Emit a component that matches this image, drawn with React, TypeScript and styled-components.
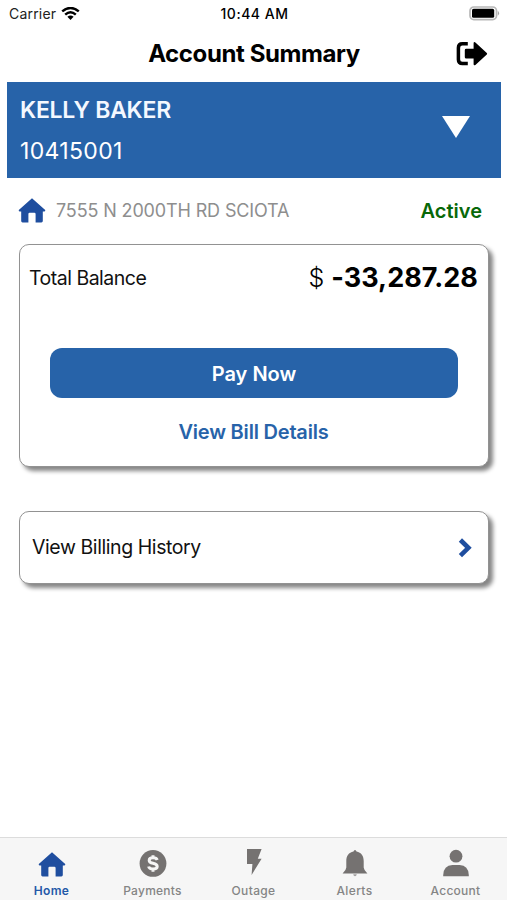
import React from "react";
import styled, { createGlobalStyle } from "styled-components";

const GlobalStyle = createGlobalStyle`
  * { box-sizing: border-box; }
  body { margin: 0; background: #fff; font-family: Inter, "Liberation Sans", sans-serif; color: #000; }
  button { font-family: inherit; }
`;

const Screen = styled.div`
  width: 507px;
  height: 900px;
  display: flex;
  flex-direction: column;
  background: #fff;
  overflow: hidden;
`;

const Text = styled.span<{ $size: number; $weight?: number; $spacing?: number; $color?: string }>`
  font-size: ${(p) => p.$size}px;
  font-weight: ${(p) => p.$weight ?? 400};
  letter-spacing: ${(p) => p.$spacing ?? 0}px;
  color: ${(p) => p.$color ?? "#000"};
  line-height: 1.2;
  white-space: nowrap;
`;

const StatusBar = styled.div`
  height: 27px;
  padding: 1px 7px 0 9px;
  display: grid;
  grid-template-columns: 1fr auto 1fr;
  align-items: center;
`;

const Carrier = styled.div`
  display: flex;
  align-items: center;
  gap: 5px;
`;

const BatterySlot = styled.div`
  display: flex;
  justify-content: flex-end;
  padding-bottom: 1px;
`;

const Header = styled.header`
  height: 54.5px;
  padding: 0 19px 0 20px;
  display: grid;
  grid-template-columns: 32px 1fr 32px;
  align-items: center;
  text-align: center;
`;

const Banner = styled.section`
  height: 96.5px;
  margin: 0 6px 0 7px;
  padding: 0 31px 6px 13px;
  display: flex;
  align-items: center;
  justify-content: space-between;
  background: #2763a9;
`;

const Holder = styled.div`
  display: flex;
  flex-direction: column;
  gap: 14px;
  padding-top: 9px;
`;

const AddressRow = styled.div`
  height: 66px;
  padding: 0 25px 0 18px;
  display: flex;
  align-items: center;
  gap: 10px;
`;

const AddressIcon = styled.div`
  padding-bottom: 5px;
`;

const Status = styled.div`
  margin-left: auto;
`;

const Card = styled.section`
  margin: 0 18px 0 19px;
  border: 1px solid #929292;
  border-radius: 10px;
  background: #fff;
  box-shadow: 4px 4px 4px rgba(0, 0, 0, 0.48);
`;

const BalanceCard = styled(Card)`
  height: 223px;
  padding: 16px 10px 0 9px;
  display: flex;
  flex-direction: column;
`;

const BalanceRow = styled.div`
  height: 34px;
  display: flex;
  align-items: center;
  justify-content: space-between;
`;

const Amount = styled.div`
  display: flex;
  align-items: center;
  gap: 7px;
`;

const PayButton = styled.button`
  height: 50px;
  margin: 53px 20px 0 21px;
  padding: 1px 0 0;
  border: 0;
  border-radius: 12px;
  background: #2763a9;
`;

const DetailsButton = styled.button`
  margin-top: 22px;
  padding: 0;
  border: 0;
  background: none;
`;

const HistoryCard = styled(Card)`
  height: 73px;
  margin-top: 43.5px;
  padding: 1px 16px 0 12px;
  display: flex;
  align-items: center;
  justify-content: space-between;
`;

const CardLabel = styled(Text)`
  padding-top: 1px;
`;

const TabBar = styled.nav`
  height: 63px;
  margin-top: auto;
  display: grid;
  grid-template-columns: repeat(5, 101px);
  padding-left: 1px;
  border-top: 1px solid #dcdcdc;
  background: #f6f6f6;
`;

const Tab = styled.div`
  display: flex;
  flex-direction: column;
  align-items: center;
  padding-top: 11px;
  gap: 7px;
`;

const Icon = styled.svg`
  display: block;
  flex: none;
`;

const HouseIcon = () => (
  <Icon width="28" height="28" viewBox="0 0 28 28" fill="#1f4e9f">
    <path d="M14 3.2 27.2 15Q27.6 16.4 26.4 16.4H24.8V26Q24.8 27.4 23.4 27.4H17.6V19Q17.6 17.8 16.4 17.8H11.6Q10.4 17.8 10.4 19V27.4H4.6Q3.2 27.4 3.2 26V16.4H1.6Q.4 16.4 .8 15Z" />
  </Icon>
);

const WifiIcon = () => (
  <Icon width="19" height="14" viewBox="0 0 19 14">
    <path d="M1.2 4.4Q9.5-2.4 17.8 4.4M4.2 7.6Q9.5 3 14.8 7.6" fill="none" stroke="#000" strokeWidth="2.5" />
    <path d="M9.5 13.1 6.4 9.8Q9.5 7.3 12.6 9.8Z" />
  </Icon>
);

const BatteryIcon = () => (
  <Icon width="31" height="15" viewBox="0 0 31 15">
    <rect x="1" y="1" width="26.5" height="12.6" rx="3.8" fill="#fff" stroke="#b8b8b8" strokeWidth="1.7" />
    <rect x="3" y="2.8" width="22.2" height="9" rx="1.6" />
    <path d="M28.8 4.8Q31.4 7.3 28.8 9.8Z" fill="#a5a5a5" />
  </Icon>
);

const LogoutIcon = () => (
  <Icon width="32" height="26" viewBox="0 0 32 26">
    <path d="M11.8 2.8H6.4Q2.4 2.8 2.4 6.8V18.6Q2.4 22.6 6.4 22.6H11.8" fill="none" stroke="#000" strokeWidth="3.5" />
    <path d="M19.4 1.4 30.8 12Q31.5 12.7 30.8 13.4L19.4 24Q17.6 25 17.6 23V17.6H10.2Q8.8 17.6 8.8 16.2V9.2Q8.8 7.8 10.2 7.8H17.6V2.4Q17.6.4 19.4 1.4Z" />
  </Icon>
);

const TriangleIcon = () => (
  <Icon width="28" height="22" viewBox="0 0 28 22">
    <path d="M0 0H28L14 22Z" fill="#fff" />
  </Icon>
);

const ChevronIcon = () => (
  <Icon width="14" height="20" viewBox="0 0 14 20">
    <path d="M2.4 2 10.4 9.8 2.4 17.6" fill="none" stroke="#1f4e9f" strokeWidth="4.6" />
  </Icon>
);

const DollarIcon = () => (
  <Icon width="28" height="28" viewBox="0 0 28 28">
    <circle cx="14" cy="14.4" r="13.4" fill="#757271" />
    <path d="M18.2 11Q17.5 8.8 14 8.8 10.2 8.8 10.2 11.4 10.2 13.5 14 14.2 18.2 15 18.2 17.4 18.2 20 14 20 10.2 20 9.6 17.5M14 6.2V9M14 20V22.7" fill="none" stroke="#f6f6f6" strokeWidth="3" />
  </Icon>
);

const BoltIcon = () => (
  <Icon width="28" height="28" viewBox="0 0 28 28" fill="#757271">
    <path d="M7 0H21.6L17.8 9.8H21.6L11.6 26 12.4 15H7Z" />
  </Icon>
);

const BellIcon = () => (
  <Icon width="28" height="28" viewBox="0 0 28 28" fill="#757271">
    <path d="M14 1Q15.1 1 15.5 2.6C20.3 3.4 22.7 7.4 22.7 12V18.6Q22.9 21.6 26.4 24.4H1.6Q5.1 21.6 5.3 18.6V12C5.3 7.4 7.7 3.4 12.5 2.6Q12.9 1 14 1Z" />
    <path d="M12.2 25.2H15.8Q15.4 27.2 14 27.2T12.2 25.2Z" opacity=".65" />
  </Icon>
);

const PersonIcon = () => (
  <Icon width="28" height="28" viewBox="0 0 28 28" fill="#757271">
    <circle cx="14" cy="7.2" r="6.4" />
    <path d="M1.2 27.2V26Q1.6 16.4 10.4 16H17.6Q26.4 16.4 26.8 26V27.2Z" />
  </Icon>
);

const tabs = [
  { label: "Home", icon: <HouseIcon />, active: true, spacing: 0.35 },
  { label: "Payments", icon: <DollarIcon />, spacing: 0.25 },
  { label: "Outage", icon: <BoltIcon />, spacing: 0.35 },
  { label: "Alerts", icon: <BellIcon />, spacing: 0.35 },
  { label: "Account", icon: <PersonIcon />, spacing: 0.25 },
];

export default function App() {
  return (
    <Screen>
      <GlobalStyle />
      <StatusBar>
        <Carrier>
          <Text $size={14} $spacing={0.2} $color="#222">Carrier</Text>
          <WifiIcon />
        </Carrier>
        <Text $size={14} $weight={500} $spacing={0.5}>10:44 AM</Text>
        <BatterySlot><BatteryIcon /></BatterySlot>
      </StatusBar>
      <Header>
        <span />
        <Text $size={24} $weight={700} $spacing={-0.4}>Account Summary</Text>
        <LogoutIcon />
      </Header>
      <Banner>
        <Holder>
          <Text $size={23} $weight={600} $spacing={-0.25} $color="#f4f8ff">KELLY BAKER</Text>
          <Text $size={23} $spacing={0.35} $color="#fff">10415001</Text>
        </Holder>
        <TriangleIcon />
      </Banner>
      <AddressRow>
        <AddressIcon><HouseIcon /></AddressIcon>
        <Text $size={18} $spacing={-0.14} $color="#8e8e8e">7555 N 2000TH RD SCIOTA</Text>
        <Status><Text $size={20} $weight={600} $color="#086808">Active</Text></Status>
      </AddressRow>
      <BalanceCard>
        <BalanceRow>
          <CardLabel $size={19.5} $spacing={-0.5} $color="#111">Total Balance</CardLabel>
          <Amount>
            <Text $size={25} $weight={300}>$</Text>
            <Text $size={27} $weight={700} $spacing={0.05}>-33,287.28</Text>
          </Amount>
        </BalanceRow>
        <PayButton><Text $size={20} $weight={600} $color="#fff">Pay Now</Text></PayButton>
        <DetailsButton><Text $size={20} $weight={600} $spacing={-0.2} $color="#2763a9">View Bill Details</Text></DetailsButton>
      </BalanceCard>
      <HistoryCard>
        <CardLabel $size={19.5} $spacing={-0.42} $color="#111">View Billing History</CardLabel>
        <ChevronIcon />
      </HistoryCard>
      <TabBar>
        {tabs.map((tab) => (
          <Tab key={tab.label}>
            {tab.icon}
            <Text $size={12} $weight={tab.active ? 600 : 500} $spacing={tab.spacing} $color={tab.active ? "#2559a8" : "#858585"}>
              {tab.label}
            </Text>
          </Tab>
        ))}
      </TabBar>
    </Screen>
  );
}
